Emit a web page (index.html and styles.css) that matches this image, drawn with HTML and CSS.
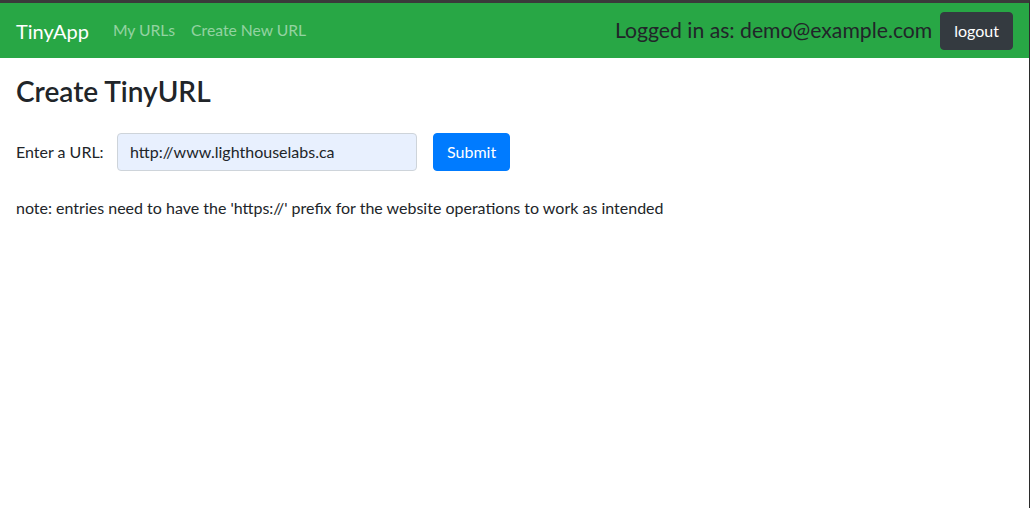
FILE: index.html
```html
<!DOCTYPE html>
<html>
<head>
<meta charset="utf-8">
<link rel="stylesheet" href="styles.css">
</head>
<body>
<nav class="navbar">
  <a class="brand" href="#">TinyApp</a>
  <div class="nav-links">
    <a class="nav-link" href="#">My URLs</a>
    <a class="nav-link" href="#">Create New URL</a>
  </div>
  <div class="nav-right">
    <span class="logged">Logged in as: demo@example.com</span>
    <button class="btn btn-dark">logout</button>
  </div>
</nav>
<main class="content">
  <h3 class="title">Create TinyURL</h3>
  <form class="url-form">
    <label class="label">Enter a URL:</label>
    <input class="input" type="text" value="http://www.lighthouselabs.ca">
    <button class="btn btn-primary" type="button">Submit</button>
  </form>
  <p class="note">note: entries need to have the 'https://' prefix for the website operations to work as intended</p>
</main>
</body>
</html>
```
FILE: styles.css
```css
* { box-sizing: border-box; }
html, body { margin: 0; padding: 0; }
body {
  font-family: Lato, "Liberation Sans", sans-serif;
  font-size: 16px;
  line-height: 1.5;
  color: #212529;
  background: #fff;
  border-top: 3px solid #3a3a3a;
  border-right: 1px solid #2b2b2b;
  min-height: 508px;
}
.navbar {
  display: flex;
  align-items: center;
  background: #28a745;
  height: 55px;
  padding: 0 16px;
}
.brand {
  color: #fff;
  font-size: 20px;
  text-decoration: none;
  margin-right: 16px;
}
.nav-links { display: flex; }
.nav-link {
  color: rgba(255,255,255,.5);
  font-size: 15.7px;
  text-decoration: none;
  padding: 0 8px;
}
.nav-right { margin-left: auto; display: flex; align-items: center; gap: 8px; }
.logged { font-size: 21.2px; color: #212529; }
.btn {
  font-family: inherit;
  font-size: 16px;
  line-height: 1.5;
  height: 38px;
  padding: 0 13px;
  border-radius: 4px;
  border: 1px solid transparent;
  color: #fff;
}
.btn-dark { background: #343a40; border-color: #343a40; }
.btn-primary { background: #007bff; border-color: #007bff; }
.content { padding: 17px 16px 0; }
.title { font-size: 28px; font-weight: 600; line-height: 1.2; margin: 0 0 24px; }
.url-form { display: flex; align-items: center; }
.label { width: 101px; }
.input {
  width: 300px; height: 38px;
  font-family: inherit; font-size: 16px;
  padding: 6px 12px;
  background: #e8f0fe;
  border: 1px solid #ced4da;
  border-radius: 4px;
  color: #212529;
  margin-right: 16px;
}
.note { margin: 25px 0 0; }
```
